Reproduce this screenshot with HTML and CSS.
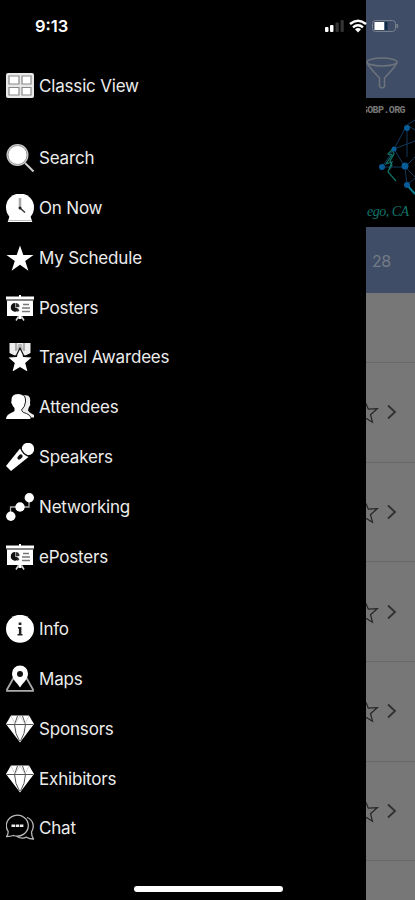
FILE: index.html
```
<!DOCTYPE html>
<html lang="en">
  <head>
    <meta charset="utf-8" />
    <meta name="viewport" content="width=device-width, initial-scale=1.0" />
    <title>Menu</title>
    <link rel="stylesheet" href="styles.css">
  </head>
  <body>
    <svg class="symbols" aria-hidden="true">
      <symbol id="poster" viewBox="0 0 28 28">
        <path d="M13 1h2v2h-2zM0 2.500h28v3H0zM1 6.500h26v15.500H1zM12.500 22h3v3h-3z" fill="#fff"/>
        <path d="M12.500 22.500L10 26.500M15.500 22.500l2.500 4" stroke="#ddd" stroke-width="1.500"/>
        <path d="M0 6h28" stroke="#888" stroke-width=".7"/>
        <path d="M9 9a4.300 4.300 0 1 0 4 6l-4-1.500z" fill="#111"/>
        <path d="M9.500 9a4 4 0 0 1 4 4l-4 .500zM10.500 15l3 1.500-2 1.500z" fill="#333"/>
        <path d="M17 10.500h6M16 14h8M16 17.500h8" stroke="#777" stroke-width="1.500"/>
      </symbol>
      <symbol id="diamond" viewBox="0 0 28 28">
        <path d="M5 .500h18l5 8.500-14 18.500L0 9z" fill="#fff"/>
        <path d="M1 9.500h26M11.500 1L8.500 9.500Q9 19 13.500 26M16.500 1l3 8.500Q19 19 14.500 26" fill="none" stroke="#555" stroke-width="1"/>
        <path d="M5 1l4 8 5-8 5 8 4-8" fill="none" stroke="#bbb" stroke-width=".7"/>
      </symbol>
      <symbol id="row" viewBox="0 0 49 24">
        <path d="M0 3.500l2.300 5.700 9-.5-6.800 6 2 7.500L0 18.200" fill="none" stroke="#252525" stroke-width="1.200"/>
        <path d="M22 5.500l7 6.500-7 6.500" fill="none" stroke="#303030" stroke-width="1.800"/>
      </symbol>
    </svg>

    <div class="screen">
      <div class="status-bar">
        <span class="time">9:13</span>
        <svg class="status-icons" viewBox="0 0 76 14">
          <rect x="1" y="8" width="3.500" height="5" rx="1" fill="#fff"/>
          <rect x="6" y="6" width="3.500" height="7" rx="1" fill="#fff"/>
          <rect x="11.500" y="3.500" width="3.300" height="9.500" rx="1" fill="#333"/>
          <rect x="16.500" y="1" width="3.300" height="12" rx="1" fill="#333"/>
          <path d="M26 5Q34 -1.500 42 5M29 8.300Q34 4 39 8.300" fill="none" stroke="#fff" stroke-width="2.400"/>
          <path d="M31 10.300q3-2.500 6 0l-3 3.200z" fill="#fff"/>
          <rect x="48.500" y="1.500" width="23" height="11" rx="3" fill="none" stroke="#78818f"/>
          <path d="M73 5q2 2 0 4z" fill="#78818f" stroke="#78818f"/>
          <rect x="50.500" y="3" width="10" height="8" fill="#fff"/>
          <rect x="60.500" y="3" width="3" height="8" fill="#102b4a"/>
        </svg>
      </div>

      <nav class="drawer">
        <ul class="menu">
          <li class="menu-item">
            <svg class="icon" viewBox="0 0 28 28">
              <rect x="0" y="1" width="28" height="25" rx="2" fill="#e8e8e8"/>
              <path d="M3 4h10v8H3zM16 4h9v8h-9zM3 15.500h10V23H3zM16 15.500h9V23h-9z" fill="#fff" stroke="#888" stroke-width="1.200"/>
            </svg>
            <span>Classic View</span>
          </li>
        </ul>
        <ul class="menu">
          <li class="menu-item">
            <svg class="icon" viewBox="0 0 28 28">
              <circle cx="11.500" cy="11" r="11" fill="#ccc"/>
              <circle cx="11.500" cy="11" r="9.500" fill="#fff" stroke="#888" stroke-width=".8"/>
              <path d="M19 19l8.500 8.500" stroke="#ccc" stroke-width="2"/>
            </svg>
            <span>Search</span>
          </li>
          <li class="menu-item">
            <svg class="icon" viewBox="0 0 28 28">
              <circle cx="14" cy="13.500" r="14" fill="#fff"/>
              <path d="M4 21h20l2.500 7.500h-25z" fill="#fff"/>
              <path d="M2.500 26.500h23" stroke="#aaa" stroke-width=".8"/>
              <path d="M14 4v10" stroke="#aaa" stroke-width="2.600"/>
              <path d="M14 14l5 4.500" stroke="#333" stroke-width="1.500"/>
              <circle cx="14" cy="14" r="1.500" fill="#222"/>
            </svg>
            <span>On Now</span>
          </li>
          <li class="menu-item">
            <svg class="icon" viewBox="0 0 28 28">
              <path d="M14 1.500l3.300 9.500H27.500l-8.300 6 3.200 9.700-8.400-6-8.400 6L8.800 17 .500 11h10.200z" fill="#fff"/>
            </svg>
            <span>My Schedule</span>
          </li>
          <li class="menu-item"><svg class="icon"><use href="#poster"/></svg><span>Posters</span></li>
          <li class="menu-item">
            <svg class="icon" viewBox="0 0 28 28">
              <path d="M3.500 0h21v10l-5 2.500h-11l-5-2.500z" fill="#eee"/>
              <path d="M10 0v8M18 0v8" stroke="#888" stroke-width="1.200"/>
              <path d="M12 1h4l1 6h-6z" fill="#bbb"/>
              <path d="M14 7l3.200 7 8.300.5-6.300 5.500 2.300 8.500-7.500-4.500-7.500 4.500 2.300-8.500-6.300-5.500 8.300-.5z" fill="#fff"/>
              <path d="M4 13.300l6.200-.5L14 5l3.800 7.800 6.200.5" fill="none" stroke="#111" stroke-width="1.200"/>
            </svg>
            <span>Travel Awardees</span>
          </li>
          <li class="menu-item">
            <svg class="icon" viewBox="0 0 28 28">
              <path d="M18 2.500c5-1 7 2 6 7.500q1 2-1 4l-1 3q0 2 6 5v2.500h-8L14 18V4z" fill="#eee"/>
              <path d="M0 26q0-4.500 7-7l1.500-1v-3Q6.500 13.500 6 11q-1.500-1-.500-3Q5 1 12 1t6.500 7q1 2-.500 3-.500 2.500-2.500 4.500v3l2 1q7 2 7 6.500z" fill="#fff"/>
              <path d="M18.500 3q1.500 3 1 6-.5 5-4 8 1 3 5 3.500 3.500 1.500 4.500 4" fill="none" stroke="#222"/>
            </svg>
            <span>Attendees</span>
          </li>
          <li class="menu-item">
            <svg class="icon" viewBox="0 0 28 28">
              <path d="M14 5.500l8.500 8.500L5 28 0 23z" fill="#fff"/>
              <circle cx="22" cy="6" r="6.200" fill="#fff"/>
              <path d="M14.500 4.500q2 7 9 9" fill="none" stroke="#111" stroke-width="1.200"/>
              <ellipse cx="14" cy="14" rx="3" ry="1.900" transform="rotate(-45 14 14)" fill="#111"/>
            </svg>
            <span>Speakers</span>
          </li>
          <li class="menu-item">
            <svg class="icon" viewBox="0 0 28 28">
              <path d="M4.500 21v-7H23V6" fill="none" stroke="#aaa" stroke-width="1.300"/>
              <circle cx="4.800" cy="23.300" r="4.700" fill="#fff"/>
              <circle cx="14" cy="14" r="4.700" fill="#fff"/>
              <circle cx="23.300" cy="4.700" r="4.700" fill="#fff"/>
            </svg>
            <span>Networking</span>
          </li>
          <li class="menu-item"><svg class="icon"><use href="#poster"/></svg><span>ePosters</span></li>
        </ul>
        <ul class="menu">
          <li class="menu-item">
            <svg class="icon" viewBox="0 0 28 28">
              <circle cx="14" cy="13.800" r="14" fill="#fff"/>
              <rect x="12.700" y="7.500" width="2.700" height="2.500" fill="#222"/>
              <path d="M12 12h3.400v7h1.100v1.500h-5V19h1.400v-5.500H12z" fill="#222"/>
            </svg>
            <span>Info</span>
          </li>
          <li class="menu-item">
            <svg class="icon" viewBox="0 0 28 28">
              <path d="M7.500 13L1 24.500v1.300h26v-1.300L20.500 13" fill="none" stroke="#aaa" stroke-width="1.800"/>
              <path d="M14 22.500C11 17.500 6 14.500 6 8.500a8 8 0 0 1 16 0c0 6-5 9-8 14z" fill="#fff"/>
              <circle cx="14" cy="9" r="3" fill="#111"/>
            </svg>
            <span>Maps</span>
          </li>
          <li class="menu-item"><svg class="icon"><use href="#diamond"/></svg><span>Sponsors</span></li>
          <li class="menu-item"><svg class="icon"><use href="#diamond"/></svg><span>Exhibitors</span></li>
          <li class="menu-item">
            <svg class="icon" viewBox="0 0 28 28" fill="none" stroke="#bbb" stroke-width="1.300">
              <path d="M2.200 17.500a11 10.500 0 1 1 5.300 4Q4.500 22.500.700 22.500q1.500-2 1.500-5z"/>
              <path d="M21 3.500c6 2 8 9 4.500 14.500q0 4 2 7-4 0-7-1.800-5 2.300-9.500-.700"/>
              <path d="M5.500 11.800h12" stroke="#eee" stroke-width="2.600" stroke-dasharray="3.500 .7"/>
            </svg>
            <span>Chat</span>
          </li>
        </ul>
        <div class="home-indicator"></div>
      </nav>

      <main class="page">
        <header class="page-header">
          <svg class="filter" viewBox="0 0 32 34" fill="none" stroke="#6d747d" stroke-width="1.500">
            <ellipse cx="16" cy="5" rx="15" ry="4"/>
            <path d="M1 5.500Q2 9 13.500 21v8.500q2.500 3 5 0V21Q30 9 31 5.500"/>
          </svg>
        </header>
        <div class="banner">
          <span class="banner-site">SOBP.ORG</span>
          <svg class="banner-art" viewBox="0 0 49 84">
            <path d="M41 8V40M41 8l8-5M28 32l13-24 8 5M28 32l21-8M16 50h23l10-10M28 32l11 18 10 10M39 50l2 18 8-7M16 50l12-18" fill="none" stroke="#12385c"/>
            <path d="M28 31l-6 6 4 1-6 9 6-2-4 10 8 9M26 32l2 5-4 7 2 4-3 5" fill="none" stroke="#127468" stroke-width="1.200"/>
            <path d="M41 68l8 9" stroke="#087d92" stroke-width="2"/>
            <g fill="#075b96">
              <circle cx="41" cy="11" r="3"/><circle cx="28" cy="32" r="2.500"/>
              <circle cx="16" cy="50" r="3"/><circle cx="39" cy="49" r="3.500"/><circle cx="41" cy="68" r="3"/>
            </g>
          </svg>
          <span class="banner-place">ego, CA</span>
        </div>
        <div class="date-bar">28</div>
        <div class="list">
          <div class="list-head"></div>
          <div class="row"><svg class="row-icons"><use href="#row"/></svg></div>
          <div class="row"><svg class="row-icons"><use href="#row"/></svg></div>
          <div class="row"><svg class="row-icons"><use href="#row"/></svg></div>
          <div class="row"><svg class="row-icons"><use href="#row"/></svg></div>
          <div class="row"><svg class="row-icons"><use href="#row"/></svg></div>
        </div>
      </main>
    </div>
  </body>
</html>
```

FILE: styles.css
```
* {
  box-sizing: border-box;
}

body {
  margin: 0;
  background-color: #000;
  font-family: Inter, "Liberation Sans", sans-serif;
  color: #ececec;
}

.symbols {
  position: absolute;
  width: 0;
  height: 0;
}

.screen {
  position: relative;
  display: flex;
  width: 415px;
  height: 900px;
  overflow: hidden;
}

/* lies over both the drawer and the page */
.status-bar {
  position: absolute;
  top: 16px;
  left: 0;
  right: 0;
  display: flex;
  justify-content: space-between;
  align-items: center;
  height: 20px;
  padding: 0 15px 0 35px;
}

.time {
  font-size: 16.500px;
  font-weight: 600;
  line-height: 20px;
  color: #fff;
}

.status-icons {
  width: 76px;
  height: 14px;
}

.drawer {
  display: flex;
  flex-direction: column;
  width: 366px;
  padding-top: 61px;
  background-color: #000;
}

.menu {
  margin: 0 0 22px;
  padding: 0;
  list-style: none;
}

.menu-item {
  display: flex;
  align-items: center;
  gap: 5px;
  height: 49.900px;
  padding-left: 6px;
  font-size: 17px;
  letter-spacing: -0.180px;
}

.icon {
  flex: none;
  width: 28px;
  height: 28px;
}

.home-indicator {
  width: 149px;
  height: 6px;
  margin: auto 0 8px 134px;
  border-radius: 3px;
  background-color: #fff;
}

.page {
  display: flex;
  flex-direction: column;
  width: 49px;
  background-color: #777;
}

.page-header {
  height: 98px;
  padding-top: 57px;
  background-color: #404d66;
}

.filter {
  display: block;
  width: 32px;
  height: 34px;
}

.banner {
  display: flex;
  flex-direction: column;
  height: 129px;
  padding-top: 7px;
  background-color: #000;
  overflow: hidden;
}

.banner-site {
  align-self: flex-end;
  margin-right: 10px;
  font-family: "Liberation Mono", monospace;
  font-size: 10px;
  font-weight: 700;
  line-height: 12px;
  letter-spacing: -0.600px;
  color: #777;
}

.banner-art {
  flex: none;
  width: 49px;
  height: 84px;
}

.banner-place {
  padding-left: 1px;
  font-family: "Liberation Serif", serif;
  font-size: 14px;
  font-style: italic;
  line-height: 22px;
  letter-spacing: -0.500px;
  color: #127468;
}

.date-bar {
  height: 66px;
  padding-left: 6px;
  font-size: 16px;
  line-height: 69px;
  letter-spacing: -0.500px;
  color: #737b87;
  background-color: #404d66;
}

.list-head {
  height: 70px;
  border-bottom: 1px solid #686868;
}

.row {
  display: flex;
  align-items: center;
  height: 99.700px;
  border-bottom: 1px solid #686868;
}

.row-icons {
  width: 49px;
  height: 24px;
}
```
